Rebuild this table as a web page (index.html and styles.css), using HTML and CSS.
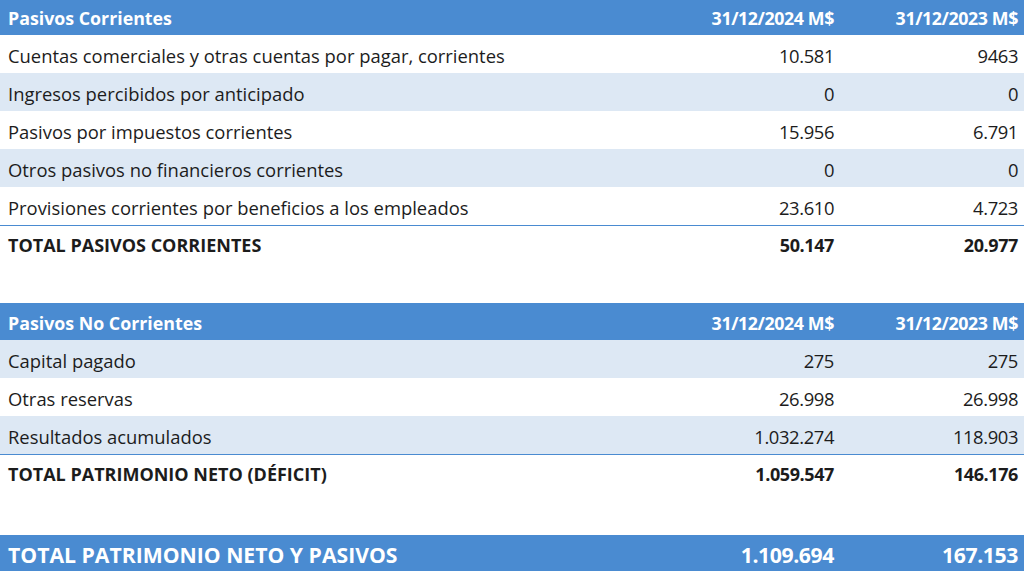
FILE: index.html
```html
<!DOCTYPE html>
<html lang="es">
<head>
<meta charset="utf-8">
<link rel="stylesheet" href="styles.css">
</head>
<body>
<div class="page">
  <table class="fin first">
    <colgroup><col class="c-label"><col class="c-num"><col class="c-num2"></colgroup>
    <thead>
      <tr class="head"><th>Pasivos Corrientes</th><th class="num">31/12/2024 M$</th><th class="num">31/12/2023 M$</th></tr>
    </thead>
    <tbody>
      <tr><td>Cuentas comerciales y otras cuentas por pagar, corrientes</td><td class="num">10.581</td><td class="num">9463</td></tr>
      <tr class="alt"><td>Ingresos percibidos por anticipado</td><td class="num">0</td><td class="num">0</td></tr>
      <tr><td>Pasivos por impuestos corrientes</td><td class="num">15.956</td><td class="num">6.791</td></tr>
      <tr class="alt"><td>Otros pasivos no financieros corrientes</td><td class="num">0</td><td class="num">0</td></tr>
      <tr class="last"><td>Provisiones corrientes por beneficios a los empleados</td><td class="num">23.610</td><td class="num">4.723</td></tr>
      <tr class="total"><td>TOTAL PASIVOS CORRIENTES</td><td class="num">50.147</td><td class="num">20.977</td></tr>
    </tbody>
  </table>

  <table class="fin second">
    <colgroup><col class="c-label"><col class="c-num"><col class="c-num2"></colgroup>
    <thead>
      <tr class="head"><th>Pasivos No Corrientes</th><th class="num">31/12/2024 M$</th><th class="num">31/12/2023 M$</th></tr>
    </thead>
    <tbody>
      <tr class="alt"><td>Capital pagado</td><td class="num">275</td><td class="num">275</td></tr>
      <tr><td>Otras reservas</td><td class="num">26.998</td><td class="num">26.998</td></tr>
      <tr class="alt last"><td>Resultados acumulados</td><td class="num">1.032.274</td><td class="num">118.903</td></tr>
      <tr class="total"><td>TOTAL PATRIMONIO NETO (DÉFICIT)</td><td class="num">1.059.547</td><td class="num">146.176</td></tr>
    </tbody>
  </table>

  <table class="fin grand">
    <colgroup><col class="c-label"><col class="c-num"><col class="c-num2"></colgroup>
    <tbody>
      <tr class="grand-row"><td>TOTAL PATRIMONIO NETO Y PASIVOS</td><td class="num">1.109.694</td><td class="num">167.153</td></tr>
    </tbody>
  </table>
</div>
</body>
</html>
```

FILE: styles.css
```css
html, body {
  margin: 0;
  padding: 0;
  background: #ffffff;
}

body {
  font-family: "Open Sans", "Liberation Sans", sans-serif;
  color: #1c1c1c;
  font-size: 18.4px;
}

.page {
  display: flex;
  flex-direction: column;
  width: 1024px;
}

.fin {
  width: 1024px;
  border-collapse: collapse;
  table-layout: fixed;
}

.c-label { width: 640px; }
.c-num { width: 200px; }
.c-num2 { width: 184px; }

.fin th,
.fin td {
  padding: 4px 6px 0 8px;
  white-space: nowrap;
  text-align: left;
  line-height: 1.2;
}

.fin .num {
  text-align: right;
  letter-spacing: -0.4px;
}

.head {
  background: #4a8bd1;
  color: #ffffff;
  height: 37px;
}

.head th {
  font-weight: 700;
  font-size: 17.8px;
  padding-top: 5px;
}

.first {
  margin-top: -2px;
}

.second {
  margin-top: 40px;
}

.fin tbody tr {
  height: 38px;
}

.fin tbody tr.alt {
  background: #dde8f4;
}

.fin tbody tr.last td {
  border-bottom: 1px solid #4a8bd1;
}

.fin tbody tr.total td {
  font-weight: 700;
  font-size: 18px;
}

.grand {
  margin-top: 43px;
}

.grand .grand-row {
  background: #4a8bd1;
  color: #ffffff;
  height: 36px;
}

.grand .grand-row td {
  font-weight: 700;
  font-size: 21.2px;
  padding-top: 4px;
}
```
